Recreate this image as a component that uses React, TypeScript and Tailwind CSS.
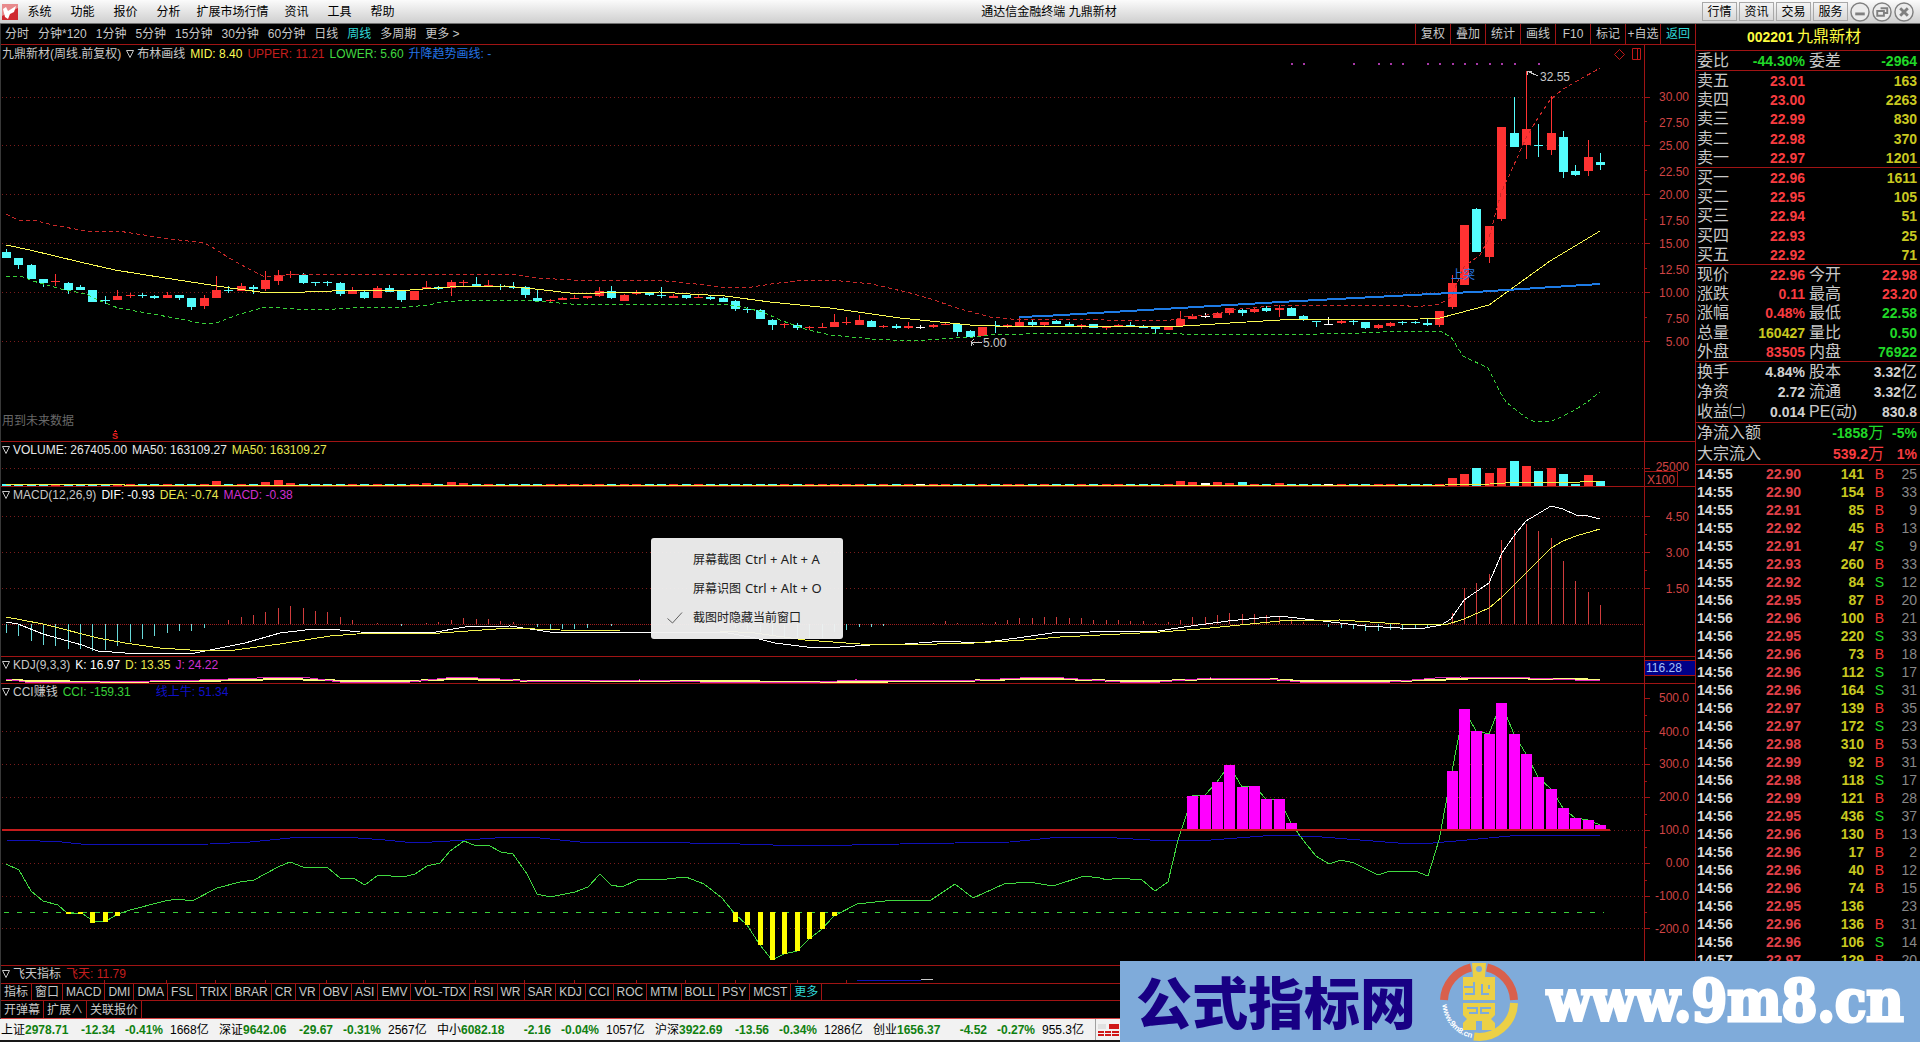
import React from "react";

const FONT = "font-['Liberation_Sans','Noto_Sans_CJK_SC',sans-serif]";
const RED = "#ff3232";
const CYAN = "#54fcfc";
const WHITE = "#ffffff";
const LINE = "#a01414";

const xAt = (i: number) => Math.round(6 + i * 12.357);

type Candle = [string, number, number, number, number];

const candles: Candle[] = [
  ["c", 249, 252, 258, 258], ["c", 258, 258, 265, 269], ["c", 264, 265, 279, 279], ["c", 279, 279, 283, 287],
  ["r", 274, 281, 282, 286], ["c", 282, 283, 290, 294], ["c", 285, 287, 290, 290], ["c", 290, 290, 302, 302],
  ["c", 296, 300, 301, 304], ["r", 290, 296, 300, 300], ["r", 293, 295, 296, 298], ["c", 293, 295, 296, 298],
  ["c", 295, 296, 298, 299], ["r", 292, 295, 298, 298], ["c", 295, 295, 298, 300], ["c", 298, 298, 307, 310],
  ["r", 295, 298, 306, 309], ["r", 276, 290, 298, 298], ["c", 286, 290, 291, 293], ["r", 283, 286, 291, 291],
  ["c", 285, 287, 289, 294], ["r", 271, 280, 289, 291], ["r", 270, 275, 281, 285], ["r", 271, 274, 275, 278],
  ["c", 273, 275, 283, 284], ["c", 282, 282, 283, 286], ["c", 281, 282, 283, 286], ["c", 282, 283, 294, 296],
  ["r", 287, 291, 294, 294], ["c", 290, 292, 298, 299], ["r", 286, 288, 298, 298], ["c", 285, 288, 292, 292],
  ["c", 291, 291, 300, 302], ["r", 291, 291, 300, 300], ["r", 281, 287, 289, 289], ["c", 286, 287, 289, 290],
  ["r", 280, 282, 288, 296], ["r", 280, 282, 283, 286], ["c", 277, 284, 286, 286], ["r", 280, 285, 287, 287],
  ["c", 284, 286, 287, 290], ["c", 282, 287, 288, 289], ["c", 286, 287, 295, 298], ["c", 290, 298, 301, 302],
  ["r", 299, 300, 301, 302], ["r", 297, 298, 300, 300], ["r", 295, 298, 299, 299], ["r", 296, 296, 298, 299],
  ["r", 287, 291, 296, 297], ["c", 286, 291, 298, 299], ["r", 294, 295, 301, 301], ["r", 290, 292, 294, 295],
  ["c", 292, 292, 295, 296], ["c", 287, 295, 296, 298], ["r", 294, 296, 298, 298], ["c", 295, 295, 298, 299],
  ["r", 295, 297, 298, 298], ["c", 296, 297, 299, 300], ["c", 297, 298, 302, 302], ["c", 300, 301, 309, 311],
  ["c", 307, 309, 310, 313], ["c", 309, 310, 319, 319], ["c", 319, 320, 325, 330], ["r", 323, 324, 325, 328],
  ["c", 323, 325, 328, 330], ["r", 326, 327, 328, 330], ["r", 323, 327, 328, 328], ["r", 314, 322, 327, 327],
  ["r", 317, 322, 323, 325], ["r", 315, 320, 325, 325], ["c", 320, 321, 327, 327], ["r", 325, 326, 327, 328],
  ["c", 324, 326, 328, 329], ["r", 322, 326, 328, 329], ["w", 325, 327, 328, 329], ["r", 324, 325, 327, 328],
  ["r", 323, 324, 325, 325], ["c", 324, 324, 332, 336], ["c", 330, 331, 337, 338], ["r", 327, 327, 336, 336],
  ["c", 321, 325, 326, 333], ["r", 324, 325, 326, 328], ["r", 318, 322, 326, 326], ["c", 320, 322, 325, 327],
  ["r", 322, 322, 325, 327], ["c", 320, 321, 324, 324], ["c", 322, 324, 327, 327], ["r", 324, 325, 326, 329],
  ["c", 324, 324, 328, 328], ["r", 326, 327, 328, 330], ["r", 324, 325, 326, 327], ["c", 322, 325, 326, 327],
  ["c", 325, 326, 328, 328], ["c", 327, 327, 329, 333], ["r", 326, 327, 330, 330], ["r", 311, 319, 326, 326],
  ["r", 314, 316, 319, 319], ["w", 313, 316, 317, 318], ["r", 312, 313, 318, 318], ["r", 308, 308, 313, 315],
  ["c", 308, 310, 313, 316], ["r", 308, 309, 312, 313], ["c", 306, 308, 311, 312], ["r", 305, 308, 310, 317],
  ["c", 307, 308, 316, 316], ["c", 315, 316, 319, 321], ["c", 321, 321, 322, 327], ["w", 317, 324, 325, 325],
  ["r", 320, 321, 323, 324], ["c", 320, 321, 322, 325], ["c", 322, 322, 328, 329], ["r", 324, 325, 328, 329],
  ["r", 322, 323, 326, 327], ["c", 321, 322, 323, 325], ["c", 321, 322, 323, 324], ["c", 319, 323, 325, 326],
  ["r", 311, 311, 325, 327], ["r", 275, 283, 307, 309], ["r", 225, 225, 285, 285], ["c", 208, 209, 252, 252],
  ["r", 226, 226, 257, 263], ["r", 127, 127, 219, 221], ["c", 97, 133, 147, 147], ["r", 71, 129, 145, 159],
  ["c", 124, 145, 146, 157], ["r", 96, 133, 150, 155], ["c", 131, 137, 172, 178], ["c", 165, 171, 175, 176],
  ["r", 140, 157, 171, 176], ["c", 153, 162, 165, 170],
];

const color = (k: string) => (k === "r" ? RED : k === "c" ? CYAN : WHITE);

const midLine =
  "6,245 30,250 80,262 115,270 165,278 230,288 260,292 305,292 360,290 410,290 450,287 505,286 535,289 570,293 600,293 660,292 690,294 725,296 770,302 830,308 900,318 970,325 995,326 1100,326 1167,327 1200,325 1230,323 1280,320 1420,319 1440,318 1489,305 1550,261 1600,231";
const upperLine =
  "6,214 18,220 37,221 53,225 86,231 118,231 163,238 204,243 212,247 229,258 249,269 265,277 286,275 310,274 510,274 539,278 571,280 620,280 666,281 696,284 721,287 746,288 771,284 805,280 830,280 872,284 906,292 931,299 957,308 990,317 1011,319 1083,319 1104,320 1171,320 1184,317 1218,314 1230,310 1272,306 1280,305 1402,305 1415,307 1440,304 1451,297 1464,267 1480,255 1489,238 1501,193 1513,167 1526,138 1538,118 1550,100 1563,89 1600,68";
const lowerLine =
  "6,276 20,276 33,281 61,289 86,294 98,300 118,308 147,313 180,319 204,324 216,323 237,315 265,307 294,309 335,309 367,307 408,307 429,305 441,302 469,300 535,301 571,304 725,304 746,308 763,312 780,320 805,329 830,335 872,339 910,341 940,339 973,337 990,335 1024,334 1041,333 1171,333 1192,335 1213,334 1280,335 1320,334 1360,333 1402,331 1440,331 1451,337 1463,356 1488,368 1500,392 1506,402 1525,417 1533,421 1549,422 1557,419 1573,411 1586,403 1600,392";
const signalDots = [104, 105, 109, 111, 112, 113, 115, 116, 117, 118, 119, 120, 121, 122, 124];

const volumeTops: Record<number, number> = {
  17: 481, 21: 482, 22: 480, 23: 483, 34: 483, 36: 482, 37: 483, 95: 481, 96: 482, 97: 483, 98: 482, 99: 483, 100: 482,
  103: 483, 117: 478, 118: 474, 119: 468, 120: 473, 121: 468, 122: 461, 123: 466, 124: 471, 125: 468, 126: 474, 127: 484,
  128: 475, 129: 481,
};

const macdEnds: Record<number, number> = {
  0: 633, 1: 636, 2: 641, 3: 645, 4: 646, 5: 649, 6: 649, 7: 651, 8: 650, 9: 646, 10: 642, 11: 639, 12: 636, 13: 633,
  14: 631, 15: 631, 16: 628, 18: 620, 19: 617, 20: 615, 21: 612, 22: 608, 23: 606, 24: 608, 25: 611, 26: 612, 27: 617,
  28: 620, 30: 623, 32: 626, 34: 623, 35: 622, 36: 620, 37: 618, 38: 619, 39: 619, 40: 621, 41: 622, 43: 627, 44: 629,
  45: 629, 46: 629, 47: 628, 49: 626, 59: 628, 60: 630, 61: 632, 62: 636, 63: 638, 64: 638, 65: 638, 66: 638, 67: 632,
  68: 630, 69: 627, 70: 627, 71: 626, 75: 623, 76: 621, 77: 623, 79: 623, 80: 622, 81: 620, 82: 618, 83: 618, 84: 617,
  85: 617, 86: 618, 87: 618, 88: 620, 89: 620, 90: 620, 91: 621, 92: 621, 93: 623, 94: 622, 95: 620, 96: 617, 97: 617,
  98: 615, 99: 613, 100: 614, 101: 614, 102: 615, 103: 616, 104: 619, 105: 622, 107: 627, 108: 628, 109: 629, 110: 631,
  111: 631, 112: 630, 113: 630, 114: 629, 115: 628, 117: 613, 118: 588, 119: 583, 120: 574, 121: 540, 122: 530, 123: 524,
  124: 531, 125: 538, 126: 561, 127: 581, 128: 592, 129: 605,
};
const difLine =
  "6,622 18,624 43,634 82,645 98,651 125,653 195,653 215,649 245,643 280,633 305,630 330,629 360,632 430,633 465,627 510,626 550,632 620,632 723,632 755,638 775,643 807,647 840,647 870,645 905,644 946,641 975,643 995,641 1024,637 1052,633 1090,632 1158,631 1191,626 1228,621 1280,616 1305,619 1340,623 1365,626 1400,628 1425,628 1441,625 1451,619 1464,600 1489,583 1502,553 1513,537 1526,521 1551,506 1563,509 1576,515 1588,516 1600,519";
const deaLine =
  "6,617 43,624 98,638 125,643 160,648 205,651 235,650 280,644 330,636 370,633 440,633 510,628 560,630 620,631 720,631 755,633 805,640 860,644 900,645 975,643 1024,640 1060,637 1160,632 1200,629 1240,625 1280,621 1340,620 1400,624 1445,625 1464,619 1489,608 1502,597 1526,573 1551,548 1563,541 1576,536 1600,529";

const cciTops: Record<number, number> = {
  96: 796, 97: 795, 98: 782, 99: 765, 100: 787, 101: 786, 102: 799, 103: 799, 104: 823, 117: 771, 118: 709, 119: 731,
  120: 734, 121: 703, 122: 734, 123: 754, 124: 777, 125: 789, 126: 808, 127: 818, 128: 820, 129: 825,
};
const cciLows: Record<number, number> = {
  5: 914, 6: 914, 7: 923, 8: 922, 9: 916, 59: 922, 60: 925, 61: 945, 62: 960, 63: 954, 64: 951, 65: 939, 66: 929, 67: 916,
};
const cciLine =
  "6,864 19,870 31,891 43,901 58,905 67,913 82,913 94,922 106,921 118,914 130,910 165,901 178,899 192,901 217,888 240,882 254,880 278,867 290,862 303,867 328,868 340,878 353,878 365,885 378,875 403,877 415,874 427,866 440,863 450,851 464,841 476,846 488,845 501,852 513,854 527,874 537,894 550,897 575,892 588,887 600,874 611,885 622,887 637,880 667,879 686,877 704,884 722,898 735,914 747,925 760,945 772,960 784,954 797,951 809,939 822,929 834,916 857,904 894,900 931,900 955,884 973,898 1004,884 1029,882 1053,886 1084,876 1100,878 1107,880 1117,878 1142,880 1155,891 1168,882 1178,840 1187,813 1192,796 1205,795 1217,782 1229,765 1242,787 1254,786 1266,799 1279,799 1291,823 1303,840 1316,856 1329,864 1341,860 1354,863 1378,875 1390,871 1415,871 1428,876 1439,840 1452,771 1464,709 1476,731 1489,734 1501,703 1514,734 1526,754 1538,777 1551,789 1563,808 1575,818 1588,820 1600,825";
const bullLine =
  "6,840 40,841 62,842 90,845 210,844 250,842 300,837 345,837 385,840 415,843 450,841 510,837 540,838 580,842 640,842 740,844 805,846 900,844 1010,842 1060,837 1100,837 1150,840 1211,840 1276,835 1322,837 1360,840 1398,843 1433,843 1467,840 1521,835 1594,835 1600,836";

function Plot({ top, height, children }: { top: number; height: number; children: React.ReactNode }) {
  return (
    <svg
      className="block w-full"
      height={height}
      viewBox={`1 ${top} 1643 ${height}`}
      preserveAspectRatio="none"
      shapeRendering="crispEdges"
      fill="none"
    >
      {children}
    </svg>
  );
}

function Grid({ ys }: { ys: number[] }) {
  return (
    <>
      {ys.map((y) => (
        <line key={y} x1={2} x2={1644} y1={y + 0.5} y2={y + 0.5} stroke="#7a1c1c" strokeDasharray="1 3" />
      ))}
    </>
  );
}

function Axis({
  top,
  height,
  labels = [],
  major = [],
  minor = [],
  children,
}: {
  top: number;
  height: number;
  labels?: [string, number][];
  major?: number[];
  minor?: number[];
  children?: React.ReactNode;
}) {
  return (
    <div className="w-[51px] shrink-0 border-l border-[#a01414]">
      <svg className="block" width={50} height={height} viewBox={`0 ${top} 50 ${height}`}>
        {major.map((y) => (
          <rect key={y} x={0} y={y} width={5} height={1} fill={LINE} />
        ))}
        {minor.map((y) => (
          <rect key={y} x={0} y={y} width={2} height={1} fill={LINE} />
        ))}
        {labels.map(([t, y]) => (
          <text key={t} x={44} y={y + 4} textAnchor="end" fontSize={12} fill="#d04444">
            {t}
          </text>
        ))}
        {children}
      </svg>
    </div>
  );
}

function Panel({
  info,
  plot,
  axis,
}: {
  info: React.ReactNode;
  plot: React.ReactNode;
  axis: React.ReactNode;
}) {
  return (
    <section className="flex border-b border-[#a01414]">
      <div className="relative min-w-0 flex-1">
        {plot}
        {info}
      </div>
      {axis}
    </section>
  );
}

function Info({ children, tall }: { children: React.ReactNode; tall?: boolean }) {
  return (
    <div
      className={`absolute left-px flex items-center gap-[5px] whitespace-pre leading-4 text-[#c8c8c8] ${tall ? "top-px" : "top-0"}`}
    >
      {children}
    </div>
  );
}

function Name({ children }: { children: React.ReactNode }) {
  return (
    <button type="button" className="flex items-center gap-[3px]">
      <svg width="8" height="10" viewBox="0 0 8 10" fill="none" stroke="#c8c8c8">
        <path d="M.5 1.5h7L4 8.500z" />
      </svg>
      {children}
    </button>
  );
}

function Menu() {
  const items = ["系统", "功能", "报价", "分析", "扩展市场行情", "资讯", "工具", "帮助"];
  return (
    <header className="flex h-6 items-center border-b border-[#707070] bg-linear-to-b from-[#fbfbfb] to-[#cfcfcf] text-xs text-black">
      <svg className="ml-[2px] shrink-0" width="16" height="16" viewBox="0 0 16 16">
        <rect width="16" height="16" fill="#cf2a30" />
        <path d="M0 0h16v4L0 12z" fill="#e88a8c" />
        <path d="M1 5l3-2 2 4 8-5-2 6-4 2-2 5-3-2z" fill="#fff" />
      </svg>
      <nav className="flex">
        {items.map((t) => (
          <button key={t} type="button" className={t.length > 2 ? "w-[85px]" : "w-[43px]"}>
            {t}
          </button>
        ))}
      </nav>
      <h1 className="flex-1 pr-2 text-center">通达信金融终端 九鼎新材</h1>
      <div className="flex items-center gap-[2px] pr-[6px]">
        {["行情", "资讯", "交易", "服务"].map((t) => (
          <button
            key={t}
            type="button"
            className="h-[19px] w-[35px] border border-[#a8a8a8] bg-linear-to-b from-[#f4f4f4] to-[#d8d8d8] leading-4"
          >
            {t}
          </button>
        ))}
        <WinButton label="最小化">
          <path d="M5.500 12.500h10" strokeWidth="3" />
        </WinButton>
        <WinButton label="还原">
          <path d="M9 6.500h7v5h-3M5.500 9.500h7v5h-7z" strokeWidth="2" />
        </WinButton>
        <WinButton label="关闭">
          <path d="M6.500 6.500l8 8m0-8l-8 8" strokeWidth="3" />
        </WinButton>
      </div>
    </header>
  );
}

function WinButton({ label, children }: { label: string; children: React.ReactNode }) {
  return (
    <button type="button" aria-label={label}>
      <svg width="20" height="20" viewBox="0 0 21 21" fill="none" stroke="#808080">
        <circle cx="10.500" cy="10.500" r="9.500" strokeWidth="1.500" fill="#ececec" />
        {children}
      </svg>
    </button>
  );
}

function Toolbar() {
  const periods = ["分时", "分钟*120", "1分钟", "5分钟", "15分钟", "30分钟", "60分钟", "日线", "周线", "多周期", "更多 >"];
  const tools = ["复权", "叠加", "统计", "画线", "F10", "标记", "+自选", "返回"];
  return (
    <div className="flex h-[21px] justify-between border-b border-[#a01414] text-[#c8c8c8]">
      <div className="flex items-center gap-[9px] pl-1">
        {periods.map((t) => (
          <button key={t} type="button" className={t === "周线" ? "text-[#30d8d8]" : ""}>
            {t}
          </button>
        ))}
      </div>
      <div className="flex">
        {tools.map((t) => (
          <button
            key={t}
            type="button"
            className={`w-[35px] border-l border-[#a01414] text-center whitespace-nowrap ${t === "返回" ? "text-[#30d8d8]" : ""}`}
          >
            {t}
          </button>
        ))}
      </div>
    </div>
  );
}

function PricePanel() {
  const majors = [97, 145, 194, 243, 292, 341];
  return (
    <Panel
      info={
        <>
          <Info tall>
            <span>九鼎新材(周线.前复权)</span>
            <Name>布林画线</Name>
            <span className="text-[#fcfc54]">MID: 8.40</span>
            <span className="text-[#c41e1e]">UPPER: 11.21</span>
            <span className="text-[#40d840]">LOWER: 5.60</span>
            <span className="text-[#2474e4]">升降趋势画线: -</span>
          </Info>
          <p className="absolute bottom-3 left-px leading-4 text-[#686868]">用到未来数据</p>
          <svg className="absolute top-[3px] right-[2px]" width="28" height="13" fill="none" stroke="#c01818">
            <path d="M5.500 1.500l5 5-5 5-5-5zM18.500.5h8v11h-8zM23.500.5v11" />
          </svg>
        </>
      }
      plot={
        <Plot top={45} height={396}>
          <Grid ys={majors} />
          {signalDots.map((i) => (
            <rect key={i} x={xAt(i)} y={63} width={2} height={2} fill="#a838a8" />
          ))}
          {candles.map(([k, hi, t, b, lo], i) => (
            <g key={i} fill={color(k)}>
              <rect x={xAt(i)} y={hi} width={1} height={Math.max(1, lo - hi)} />
              <rect x={xAt(i) - 4} y={t} width={9} height={b - t} />
            </g>
          ))}
          <polyline points={upperLine} stroke="#c82828" strokeDasharray="4 3" />
          <polyline points={lowerLine} stroke="#38d038" strokeDasharray="4 3" />
          <polyline points={midLine} stroke="#fcfc54" />
          <polyline points="1019,317 1045,316 1280,302 1451,293 1475,292 1600,284" stroke="#1e7ce6" strokeWidth={2} />
          <path d="M1527 71l11 5M1527 75v-4h5" stroke="#c8c8c8" />
          <text x={1540} y={81} fontSize={12} fill="#c8c8c8">32.55</text>
          <path d="M971 342h11M971 346v-4l3-3M971 342l3 3" stroke="#c8c8c8" />
          <text x={983} y={347} fontSize={12} fill="#c8c8c8">5.00</text>
          <text x={1451} y={279} fontSize={12} fill="#2a78e0">上突</text>
          <text x={112} y={439} fontSize={9} fontWeight={700} fill="#f02020">S</text>
          <path d="M113 432l2-2 3 2z" fill="#f02020" />
        </Plot>
      }
      axis={
        <Axis
          top={45}
          height={396}
          major={majors}
          minor={[121, 170, 219, 268, 317]}
          labels={[
            ["30.00", 97], ["27.50", 123], ["25.00", 146], ["22.50", 172], ["20.00", 195], ["17.50", 221], ["15.00", 244],
            ["12.50", 270], ["10.00", 293], ["7.50", 319], ["5.00", 342],
          ]}
        />
      }
    />
  );
}

function VolumePanel() {
  return (
    <Panel
      info={
        <Info>
          <Name>
            <span className="text-[#e8e8e8]">VOLUME: 267405.00</span>
          </Name>
          <span className="text-[#e8e8e8]">MA50: 163109.27</span>
          <span className="text-[#e8e850]">MA50: 163109.27</span>
        </Info>
      }
      plot={
        <Plot top={442} height={44}>
          <Grid ys={[468]} />
          {candles.map(([k], i) => {
            const t = volumeTops[i] ?? 484;
            return <rect key={i} x={xAt(i) - 4} y={t} width={9} height={486 - t} fill={color(k)} />;
          })}
          <polyline points="6,484 124,484 124,485 1445,485 1490,484 1520,482 1580,482 1583,481 1600,481" stroke="#f0f040" />
        </Plot>
      }
      axis={
        <Axis top={442} height={44} major={[468]} labels={[["25000", 467]]}>
          <rect x={-0.5} y={471.5} width={33} height={15} fill="#000" stroke={LINE} />
          <text x={2} y={484} fontSize={12} fill="#d04444">X100</text>
        </Axis>
      }
    />
  );
}

function MacdPanel() {
  return (
    <Panel
      info={
        <Info>
          <Name>MACD(12,26,9)</Name>
          <span className="text-white">DIF: -0.93</span>
          <span className="text-[#e8e850]">DEA: -0.74</span>
          <span className="text-[#d030d0]">MACD: -0.38</span>
        </Info>
      }
      plot={
        <Plot top={487} height={169}>
          <Grid ys={[516, 552, 588]} />
          <line x1={2} x2={1644} y1={624.5} y2={624.5} stroke="#a02020" strokeDasharray="1 1" />
          {Object.entries(macdEnds).map(([i, y]) => (
            <rect
              key={i}
              x={xAt(Number(i))}
              y={Math.min(624, y)}
              width={1}
              height={Math.abs(y - 624)}
              fill={y > 624 ? "#68d8d8" : "#d03c3c"}
            />
          ))}
          <polyline points={difLine} stroke="#fff" />
          <polyline points={deaLine} stroke="#f4f450" />
        </Plot>
      }
      axis={
        <Axis
          top={487}
          height={169}
          major={[516, 552, 588]}
          minor={[534, 570]}
          labels={[["4.50", 517], ["3.00", 553], ["1.50", 589]]}
        />
      }
    />
  );
}

function KdjPanel() {
  return (
    <Panel
      info={
        <Info>
          <Name>KDJ(9,3,3)</Name>
          <span className="text-white">K: 16.97</span>
          <span className="text-[#e8e850]">D: 13.35</span>
          <span className="text-[#d030d0]">J: 24.22</span>
        </Info>
      }
      plot={
        <Plot top={657} height={26}>
          <polyline
            points="6,680 40,681 100,682 200,681 285,679 320,680 350,681 410,681 455,679 500,680 540,681 640,681 700,681 820,682 960,681 1020,679 1060,679 1120,681 1160,681 1210,679 1270,679 1300,681 1390,681 1435,680 1480,678 1575,679 1600,680"
            stroke="#fcfc80"
            strokeWidth={2}
          />
          <polyline
            points="6,679 25,682 100,682 200,680 285,677 310,678 340,682 410,682 455,677 500,679 540,682 640,680 700,682 820,682 855,680 960,681 1020,678 1050,677 1120,682 1160,682 1210,678 1270,679 1300,682 1390,682 1435,678 1460,677 1530,678 1575,680 1600,681"
            stroke="#e028b8"
          />
        </Plot>
      }
      axis={
        <Axis top={657} height={26}>
          <rect x={-1} y={660.5} width={52} height={15} fill="#000088" stroke={LINE} />
          <text x={1} y={672} fontSize={12} fill="#a8c0f8">116.28</text>
        </Axis>
      }
    />
  );
}

function CciPanel() {
  const ys = [731, 764, 797, 830, 863, 896, 928];
  return (
    <Panel
      info={
        <Info>
          <Name>CCI赚钱</Name>
          <span className="text-[#38d038]">CCI: -159.31</span>
          <span className="pl-5 text-[#1010c8]">线上牛: 51.34</span>
        </Info>
      }
      plot={
        <Plot top={684} height={281}>
          <Grid ys={ys} />
          <line x1={4} x2={1604} y1={912.5} y2={912.5} stroke="#38d038" strokeDasharray="5 8" />
          <polyline points={bullLine} stroke="#1010b8" />
          <polyline points={cciLine} stroke="#40d840" />
          {Object.entries(cciTops).map(([i, y]) => (
            <rect key={i} x={xAt(Number(i)) - 5} y={y} width={11} height={830 - y} fill="#ff00ff" />
          ))}
          {Object.entries(cciLows).map(([i, y]) => (
            <rect key={i} x={xAt(Number(i)) - 2} y={912} width={5} height={y - 912} fill="#ffff00" />
          ))}
          <rect x={2} y={829} width={1608} height={2} fill="#c41c1c" />
        </Plot>
      }
      axis={
        <Axis
          top={684}
          height={281}
          major={[698, ...ys]}
          minor={[715, 748, 781, 814, 847, 880, 912]}
          labels={[
            ["500.0", 698], ["400.0", 732], ["300.0", 764], ["200.0", 797], ["100.0", 830], ["0.00", 863], ["-100.0", 896],
            ["-200.0", 929],
          ]}
        />
      }
    />
  );
}

function FlyPanel() {
  return (
    <Panel
      info={
        <Info>
          <Name>飞天指标</Name>
          <span className="text-[#c41e1e]">飞天: 11.79</span>
        </Info>
      }
      plot={
        <Plot top={966} height={17}>
          {[104, 166, 215, 265, 326, 363, 425, 475, 524, 574, 636, 685, 735, 797, 846].map((x) => (
            <rect key={x} x={x} y={980} width={1} height={3} fill={LINE} />
          ))}
          <rect x={857} y={980} width={64} height={1} fill="#1010b8" />
          <rect x={921} y={979} width={12} height={1} fill="#c8c8c8" />
        </Plot>
      }
      axis={<Axis top={966} height={17} />}
    />
  );
}

function Tabs() {
  const tabs =
    "指标 窗口 MACD DMI DMA FSL TRIX BRAR CR VR OBV ASI EMV VOL-TDX RSI WR SAR KDJ CCI ROC MTM BOLL PSY MCST 更多".split(" ");
  return (
    <>
      <div className="flex h-[17px] border-b border-[#a01414] text-[#c8c8c8]">
        {tabs.map((t) => (
          <button
            key={t}
            type="button"
            className={`border-r border-[#a01414] px-[3px] leading-4 ${t === "更多" ? "text-[#30d8d8]" : ""}`}
          >
            {t}
          </button>
        ))}
      </div>
      <div className="flex h-[18px] border-b border-[#d04040] text-[#c8c8c8]">
        {["开弹幕", "扩展∧", "关联报价"].map((t) => (
          <button key={t} type="button" className="border-r border-[#a01414] px-[3px] leading-4">
            {t}
          </button>
        ))}
      </div>
    </>
  );
}

const R = "text-[#f83c40]";
const G = "text-[#20d828]";
const Y = "text-[#c8c820]";
const W = "text-[#d0d0d0]";

type Quote = [string, string, string, string, string, string];

function Value({ text }: { text: string }) {
  const unit = /[亿万]$/.test(text) ? text.slice(-1) : "";
  return (
    <>
      <b>{unit ? text.slice(0, -1) : text}</b>
      {unit && <span className="text-base leading-[18px]">{unit}</span>}
    </>
  );
}

function QuoteTable({ rows, className }: { rows: Quote[]; className: string }) {
  return (
    <table className={`w-full table-fixed border-b border-[#a01414] text-sm ${className}`}>
      <colgroup>
        <col className="w-[52px]" />
        <col className="w-[57px]" />
        <col className="w-[50px]" />
        <col />
      </colgroup>
      <tbody>
        {rows.map(([a, av, ac, b, bv, bc]) => (
          <tr key={a} className="h-[19px] leading-[18px] whitespace-nowrap">
            <th scope="row" className="p-0 pl-px text-left text-base leading-[18px] font-normal text-[#c8c8c8]">{a}</th>
            <td className={`p-0 text-right ${ac}`}><Value text={av} /></td>
            <td className="p-0 pl-1 text-left text-base leading-[18px] text-[#c8c8c8]">{b}</td>
            <td className={`p-0 pr-[3px] text-right ${bc}`}><Value text={bv} /></td>
          </tr>
        ))}
      </tbody>
    </table>
  );
}

const q = (name: string, price: string, vol: string): Quote => [name, price, R, "", vol, Y];

const ticks = `14:55 22.90 141 B 25
14:55 22.90 154 B 33
14:55 22.91 85 B 9
14:55 22.92 45 B 13
14:55 22.91 47 S 9
14:55 22.93 260 B 33
14:55 22.92 84 S 12
14:56 22.95 87 B 20
14:56 22.96 100 B 21
14:56 22.95 220 S 33
14:56 22.96 73 B 18
14:56 22.96 112 S 17
14:56 22.96 164 S 31
14:56 22.97 139 B 35
14:56 22.97 172 S 23
14:56 22.98 310 B 53
14:56 22.99 92 B 31
14:56 22.98 118 S 17
14:56 22.99 121 B 28
14:56 22.95 436 S 37
14:56 22.96 130 B 13
14:56 22.96 17 B 2
14:56 22.96 40 B 12
14:56 22.96 74 B 15
14:56 22.95 136 - 23
14:56 22.96 136 B 31
14:56 22.96 106 S 14
14:57 22.97 129 B 20`
  .split("\n")
  .map((r) => r.split(" "));

function QuotePanel() {
  return (
    <aside className="w-[225px] shrink-0 border-l border-[#a01414]">
      <h2 className="h-[27px] border-b border-[#a01414] pr-2 text-center leading-[26px] text-[#fcfc40]">
        <b className="text-sm">002201</b> <span className="text-base leading-[26px] font-normal">九鼎新材</span>
      </h2>
      <QuoteTable className="h-5" rows={[["委比", "-44.30%", G, "委差", "-2964", G]]} />
      <QuoteTable
        className="h-[97px]"
        rows={[q("卖五", "23.01", "163"), q("卖四", "23.00", "2263"), q("卖三", "22.99", "830"), q("卖二", "22.98", "370"), q("卖一", "22.97", "1201")]}
      />
      <QuoteTable
        className="h-[97px]"
        rows={[q("买一", "22.96", "1611"), q("买二", "22.95", "105"), q("买三", "22.94", "51"), q("买四", "22.93", "25"), q("买五", "22.92", "71")]}
      />
      <QuoteTable
        className="h-[97px]"
        rows={[
          ["现价", "22.96", R, "今开", "22.98", R],
          ["涨跌", "0.11", R, "最高", "23.20", R],
          ["涨幅", "0.48%", R, "最低", "22.58", G],
          ["总量", "160427", Y, "量比", "0.50", G],
          ["外盘", "83505", R, "内盘", "76922", G],
        ]}
      />
      <QuoteTable
        className="h-[61px]"
        rows={[
          ["换手", "4.84%", W, "股本", "3.32亿", W],
          ["净资", "2.72", W, "流通", "3.32亿", W],
          ["收益㈡", "0.014", W, "PE(动)", "830.8", W],
        ]}
      />
      <table className="h-[42px] w-full table-fixed border-b border-[#a01414] text-sm">
        <tbody>
          {[["净流入额", "-1858万", "-5%", G], ["大宗流入", "539.2万", "1%", R]].map(([a, b, c, k]) => (
            <tr key={a} className="h-[19px] leading-[18px]">
              <th scope="row" className="w-[110px] p-0 pl-px text-left text-base leading-[18px] font-normal text-[#c8c8c8]">{a}</th>
              <td className={`p-0 text-right ${k}`}><Value text={b} /></td>
              <td className={`w-9 p-0 pr-[3px] text-right font-bold ${k}`}>{c}</td>
            </tr>
          ))}
        </tbody>
      </table>
      <table className="w-full table-fixed text-sm">
        <colgroup>
          <col className="w-[45px]" />
          <col className="w-[60px]" />
          <col className="w-[63px]" />
          <col className="w-6" />
          <col />
        </colgroup>
        <tbody>
          {ticks.map(([t, p, v, s, n], i) => (
            <tr key={i} className="h-[18px] leading-[18px] font-bold">
              <td className="p-0 pl-px text-[#d8d8d8]">{t}</td>
              <td className="p-0 text-right text-[#e04048]">{p}</td>
              <td className="p-0 text-right text-[#c8c820]">{v}</td>
              <td className={`p-0 pr-1 text-right font-normal ${s === "S" ? "text-[#20d828]" : "text-[#f03030]"}`}>
                {s === "-" ? "" : s}
              </td>
              <td className="p-0 pr-[3px] text-right font-normal text-[#888888]">{n}</td>
            </tr>
          ))}
        </tbody>
      </table>
    </aside>
  );
}

function Ticker() {
  const items = [
    ["上证", "2978.71", "-12.34", "-0.41%", "1668亿"],
    ["深证", "9642.06", "-29.67", "-0.31%", "2567亿"],
    ["中小", "6082.18", "-2.16", "-0.04%", "1057亿"],
    ["沪深", "3922.69", "-13.56", "-0.34%", "1286亿"],
    ["创业", "1656.37", "-4.52", "-0.27%", "955.3亿"],
  ];
  return (
    <footer className="flex h-[23px] border-b-2 border-[#181818] bg-[#f2f2f2] text-black">
      {items.map(([n, p, c, pc, amt]) => (
        <div key={n} className="flex w-[218px] shrink-0 items-center pl-px">
          <span className="w-6">{n}</span>
          <b className="w-[46px] text-[#108010]">{p}</b>
          <b className="w-11 text-right text-[#108010]">{c}</b>
          <b className="w-12 text-right text-[#108010]">{pc}</b>
          <span className="pl-[7px]">{amt}</span>
        </div>
      ))}
      <svg className="ml-1" width="28" height="21">
        <path d="M1.500 0v21" stroke="#a0a0a0" />
        <path d="M15 5h10v5H15zM4 12h6v2H4zM11 12h6v2h-6zM18 12h7v2h-7zM4 15h6v2H4zM11 15h6v2h-6zM18 15h7v2h-7z" fill="#d01818" />
        <path d="M4 5h8v5H4z" fill="#e0e0e0" />
      </svg>
    </footer>
  );
}

function ScreenshotMenu() {
  const items: [string, string][] = [
    ["屏幕截图", "Ctrl + Alt + A"],
    ["屏幕识图", "Ctrl + Alt + O"],
    ["截图时隐藏当前窗口", ""],
  ];
  return (
    <div
      role="menu"
      className="absolute top-[538px] left-[651px] w-48 rounded-[3px] bg-[#f0f0f0]/96 py-[7px] font-['Noto_Sans','Noto_Sans_CJK_SC',sans-serif] text-xs text-[#202020]"
    >
      {items.map(([t, keys]) => (
        <button key={t} type="button" role="menuitem" className="flex h-[29px] w-full items-center pl-4 whitespace-nowrap">
          <svg width="16" height="12" viewBox="0 0 16 12" fill="none" stroke="#606060" className={keys ? "invisible" : ""}>
            <path d="M.5 6.500l5 4.500L15 .5" />
          </svg>
          <span className="pl-[10px]">{t}</span>
          {keys && <span className="pl-1 text-[13px]">{keys}</span>}
        </button>
      ))}
    </div>
  );
}

function Banner() {
  return (
    <div className="absolute right-0 bottom-0 flex h-[81px] w-[800px] items-center bg-[#7fabda] whitespace-nowrap">
      <span className="pb-1 pl-4 font-['Noto_Sans_CJK_SC',sans-serif] text-[56px] leading-[72px] font-black text-[#180084]">公式指标网</span>
      <svg className="ml-6 shrink-0" width="78" height="78" viewBox="0 0 78 78">
        <path d="M4 37A35 35 0 0 1 31 4.500M47 4.500A35 35 0 0 1 74 37" fill="none" stroke="#d9604c" strokeWidth="8" />
        <path d="M74 40A35 35 0 0 1 34 73.500" fill="none" stroke="#ecd046" strokeWidth="8" />
        <path d="M32 0h14l-1 14h10v23H23V14h10z" fill="#ecd046" />
        <circle cx="39" cy="6" r="3" fill="#7fabda" />
        <path d="M24 24h11M34 19v12h-9M42 21v10h7M49 22v4" stroke="#7fabda" strokeWidth="2" fill="none" />
        <path d="M23 40h32v12l-4 4 4 4v7H42v-9h-6v9H23v-7l4-4-4-4z" fill="#ecd046" />
        <path d="M27 45h10v5h-8M51 45H41v5h8" stroke="#7fabda" strokeWidth="2" fill="none" />
        <path id="ringText" d="M1.500 42A37.500 37.500 0 0 0 32 76" fill="none" />
        <text fontSize="8" fontWeight="700" fill="#fff" dy="-1">
          <textPath href="#ringText">www.9m8.cn</textPath>
        </text>
      </svg>
      <a
        href="#site"
        className="ml-[29px] pb-[2px] font-['DejaVu_Serif_Condensed','DejaVu_Serif',serif] text-[57px] leading-[60px] font-bold text-white [-webkit-text-stroke:3px_white]"
      >
        www.9m8.cn
      </a>
    </div>
  );
}

export default function App() {
  return (
    <div className={`relative overflow-hidden bg-black text-xs ${FONT}`}>
      <Menu />
      <div className="flex">
        <main className="min-w-0 flex-1 border-l border-[#383838]">
          <Toolbar />
          <PricePanel />
          <VolumePanel />
          <MacdPanel />
          <KdjPanel />
          <CciPanel />
          <FlyPanel />
          <Tabs />
        </main>
        <QuotePanel />
      </div>
      <Ticker />
      <ScreenshotMenu />
      <Banner />
    </div>
  );
}
